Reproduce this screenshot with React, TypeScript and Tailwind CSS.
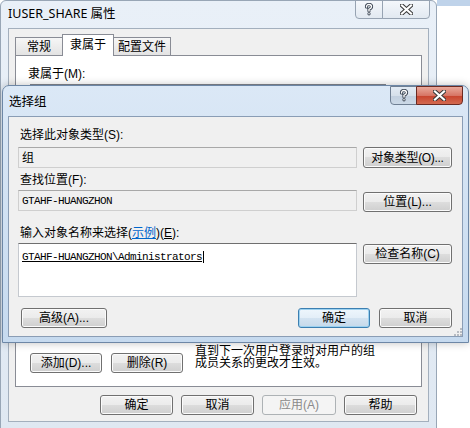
import React from "react";

const ui = "font-['Liberation_Sans','Noto_Sans_CJK_SC',sans-serif] text-[12px] leading-[14px] text-black";
const mono = "font-['Liberation_Mono',monospace] text-[11px] tracking-[-0.6px] leading-[14px] text-black";

const btnBase =
  "flex shrink-0 items-center justify-center rounded-[3px] border text-[12px] leading-none whitespace-nowrap";
const btnNormal =
  "border-[#707070] bg-[linear-gradient(#f2f2f2_0%,#ebebeb_50%,#dddddd_50%,#cfcfcf_100%)] shadow-[inset_0_0_0_1px_#fbfbfb] text-black";
const btnDefault =
  "border-[#3c7fb1] bg-[linear-gradient(#eef6fc_0%,#e3eef8_50%,#d3e3f1_50%,#c6d9ea_100%)] shadow-[inset_0_0_0_1px_#9cd1f0] text-black";
const btnDisabled = "border-[#adb2b5] bg-[#f4f4f4] text-[#8a8a8a]";

function Btn({
  children,
  className = "",
  kind = "normal",
}: {
  children: React.ReactNode;
  className?: string;
  kind?: "normal" | "default" | "disabled";
}) {
  const k = kind === "default" ? btnDefault : kind === "disabled" ? btnDisabled : btnNormal;
  return <div className={`${btnBase} ${k} ${className}`}>{children}</div>;
}

function QGlyph() {
  return (
    <svg width="10" height="13" viewBox="0 0 10 13">
      <path d="M2.5 4 Q2.5 1.5 5 1.5 Q7.5 1.5 7.5 3.8 Q7.5 5.3 5 6.3 L5 8" fill="none" stroke="#3a4452" strokeWidth="3.2" strokeLinecap="round" />
      <circle cx="5" cy="10.8" r="1.6" fill="#3a4452" />
      <path d="M2.5 4 Q2.5 1.5 5 1.5 Q7.5 1.5 7.5 3.8 Q7.5 5.3 5 6.3 L5 8" fill="none" stroke="#fff" strokeWidth="1.4" strokeLinecap="round" />
      <circle cx="5" cy="10.8" r="0.8" fill="#fff" />
    </svg>
  );
}

function XGlyph() {
  return (
    <svg width="13" height="11" viewBox="0 0 13 11">
      <path d="M2 1.5 L11 9.5 M11 1.5 L2 9.5" stroke="#3a3a3a" strokeWidth="4.2" strokeLinecap="square" />
      <path d="M2 1.5 L11 9.5 M11 1.5 L2 9.5" stroke="#fff" strokeWidth="2.2" strokeLinecap="square" />
    </svg>
  );
}

function Grip() {
  return (
    <svg width="9" height="9" viewBox="0 0 9 9">
      {[
        [7, 1],
        [4, 4],
        [7, 4],
        [1, 7],
        [4, 7],
        [7, 7],
      ].map(([x, y], i) => (
        <rect key={i} x={x} y={y} width="2" height="2" fill="#b8bcc2" />
      ))}
    </svg>
  );
}

function BackWindow() {
  return (
    <div className="absolute left-0 top-0 flex w-[437px] flex-col rounded-t-[6px] border border-[#98a6b6] bg-[linear-gradient(#e9f0f8,#dfe8f2)] px-[7px] pb-[8px]">
      {/* title bar */}
      <div className="flex h-[27px] items-start">
        <span className="pt-[6px] font-['Noto_Sans','Noto_Sans_CJK_SC',sans-serif] text-[12.5px] leading-[14px] text-black">
          IUSER_SHARE 属性
        </span>
        <div className="-mt-px ml-auto -mr-px flex">
          <div className="flex h-[19px] w-[28px] items-center justify-center rounded-bl-[4px] border border-[#97a3b2] bg-[linear-gradient(#f4f7fb,#e2e9f1)]">
            <QGlyph />
          </div>
          <div className="-ml-px flex h-[19px] w-[48px] items-center justify-center rounded-br-[4px] border border-[#97a3b2] bg-[linear-gradient(#f4f7fb,#e2e9f1)]">
            <XGlyph />
          </div>
        </div>
      </div>

      {/* client */}
      <div className={`flex flex-col border border-[#a3afbd] bg-[#f0f0f0] px-[6px] pb-[6px] pt-[5px] ${ui}`}>
        {/* tabs */}
        <div className="relative z-10 -mb-px flex h-[22px] items-end">
          <div className="mb-px flex h-[18px] w-[48px] items-center justify-center border border-b-0 border-[#898c95] bg-[linear-gradient(#f6f6f6,#e3e3e3)]">
            常规
          </div>
          <div className="-ml-px flex h-[22px] w-[52px] items-center justify-center border border-b-0 border-[#898c95] bg-white pb-[2px]">
            隶属于
          </div>
          <div className="-ml-px mb-px flex h-[18px] w-[58px] items-center justify-center border border-b-0 border-[#898c95] bg-[linear-gradient(#f6f6f6,#e3e3e3)]">
            配置文件
          </div>
        </div>

        {/* panel */}
        <div className="flex h-[332px] w-[407px] flex-col border border-[#898c95] bg-white pl-[12px] pt-[11px]">
          <div className="h-[14px]">隶属于(M):</div>
          <div className="ml-[2px] mt-[3px] h-[255px] w-[356px] border border-[#828790] bg-white" />
          <div className="ml-[2px] mt-[14px] flex items-start">
            <Btn className="h-[20px] w-[72px]">添加(D)...</Btn>
            <Btn className="ml-[9px] h-[20px] w-[72px]">删除(R)</Btn>
            <div className="-mt-[8px] ml-[12px] w-[190px] leading-[12px]">
              直到下一次用户登录时对用户的组成员关系的更改才生效。
            </div>
          </div>
        </div>

        {/* bottom buttons */}
        <div className="mt-[8px] flex justify-end gap-[8px] pr-[5px]">
          <Btn className="h-[20px] w-[73px]">确定</Btn>
          <Btn className="h-[20px] w-[73px]">取消</Btn>
          <Btn kind="disabled" className="h-[20px] w-[74px]">应用(A)</Btn>
          <Btn className="h-[20px] w-[73px]">帮助</Btn>
        </div>
      </div>
    </div>
  );
}

function FrontDialog() {
  return (
    <div className="absolute left-[2px] top-[85px] flex w-[467px] flex-col rounded-t-[7px] border border-[#6d87a6] bg-[linear-gradient(#dbe8f6,#c6daef)] px-[5px] pb-[5px] shadow-[0_0_8px_rgba(0,0,0,0.25)]">
      {/* title bar */}
      <div className="flex h-[30px] items-start">
        <span className="pl-[1px] pt-[8px] font-['Noto_Sans_CJK_SC',sans-serif] text-[12.5px] leading-[14px] text-black">
          选择组
        </span>
        <div className="ml-auto flex">
          <div className="flex h-[19px] w-[27px] items-center justify-center rounded-bl-[4px] border border-[#6f7f93] bg-[linear-gradient(#e3ebf4_0%,#d6e0eb_50%,#c1cfdf_50%,#ccd9e7_100%)]">
            <QGlyph />
          </div>
          <div className="-ml-px flex h-[19px] w-[47px] items-center justify-center rounded-br-[4px] border border-[#6b2a22] bg-[linear-gradient(#e9a99b_0%,#d77565_50%,#c7412c_50%,#d36a50_100%)]">
            <XGlyph />
          </div>
        </div>
      </div>

      {/* client */}
      <div className={`relative flex h-[221px] flex-col border border-[#8a9db5] bg-[#f0f0f0] pl-[9px] pr-[10px] pt-[11px] ${ui}`}>
        <div className="ml-[2px] h-[14px]">选择此对象类型(S):</div>
        <div className="mt-[5px] flex gap-[6px]">
          <div className="flex h-[21px] w-[339px] items-center border border-[#cfcfcf] border-t-[#a8a8a8] bg-[#f0f0f0] pl-[3px]">
            组
          </div>
          <Btn className="h-[21px] w-[89px] tracking-[-0.3px]">对象类型(O)...</Btn>
        </div>

        <div className="ml-[2px] mt-[5px] h-[14px]">查找位置(F):</div>
        <div className="mt-[3px] flex gap-[6px]">
          <div className={`flex h-[21px] w-[339px] items-center border border-[#cfcfcf] border-t-[#a8a8a8] bg-[#f0f0f0] pl-[3px] ${mono}`}>
            GTAHF-HUANGZHON
          </div>
          <Btn className="mt-[2px] h-[20px] w-[89px]">位置(L)...</Btn>
        </div>

        <div className="ml-[2px] mt-[14px] h-[14px]">
          输入对象名称来选择(<span className="text-[#0066cc] underline">示例</span>)(<span className="underline">E</span>):
        </div>
        <div className="mt-[3px] flex items-start gap-[6px]">
          <div className="h-[54px] w-[339px] border border-[#c5c9cf] border-t-[#6f6f6f] bg-white pl-[3px] pt-[5px]">
            <span className={`border-r border-black pr-px underline ${mono}`}>GTAHF-HUANGZHON\Administrators</span>
          </div>
          <Btn className="mt-px h-[20px] w-[89px]">检查名称(C)</Btn>
        </div>

        <div className="mt-[11px] flex">
          <Btn className="ml-[3px] h-[20px] w-[86px]">高级(A)...</Btn>
          <Btn kind="default" className="ml-auto h-[20px] w-[72px]">确定</Btn>
          <Btn className="ml-[9px] h-[20px] w-[73px]">取消</Btn>
        </div>

        <div className="absolute bottom-0 right-0">
          <Grip />
        </div>
      </div>
    </div>
  );
}

export default function App() {
  return (
    <div className="relative h-[428px] w-[470px] overflow-hidden bg-white">
      <div className="absolute left-[437px] top-0 h-[6px] w-[33px] bg-[#bfd3ea]" />
      <BackWindow />
      <FrontDialog />
    </div>
  );
}
